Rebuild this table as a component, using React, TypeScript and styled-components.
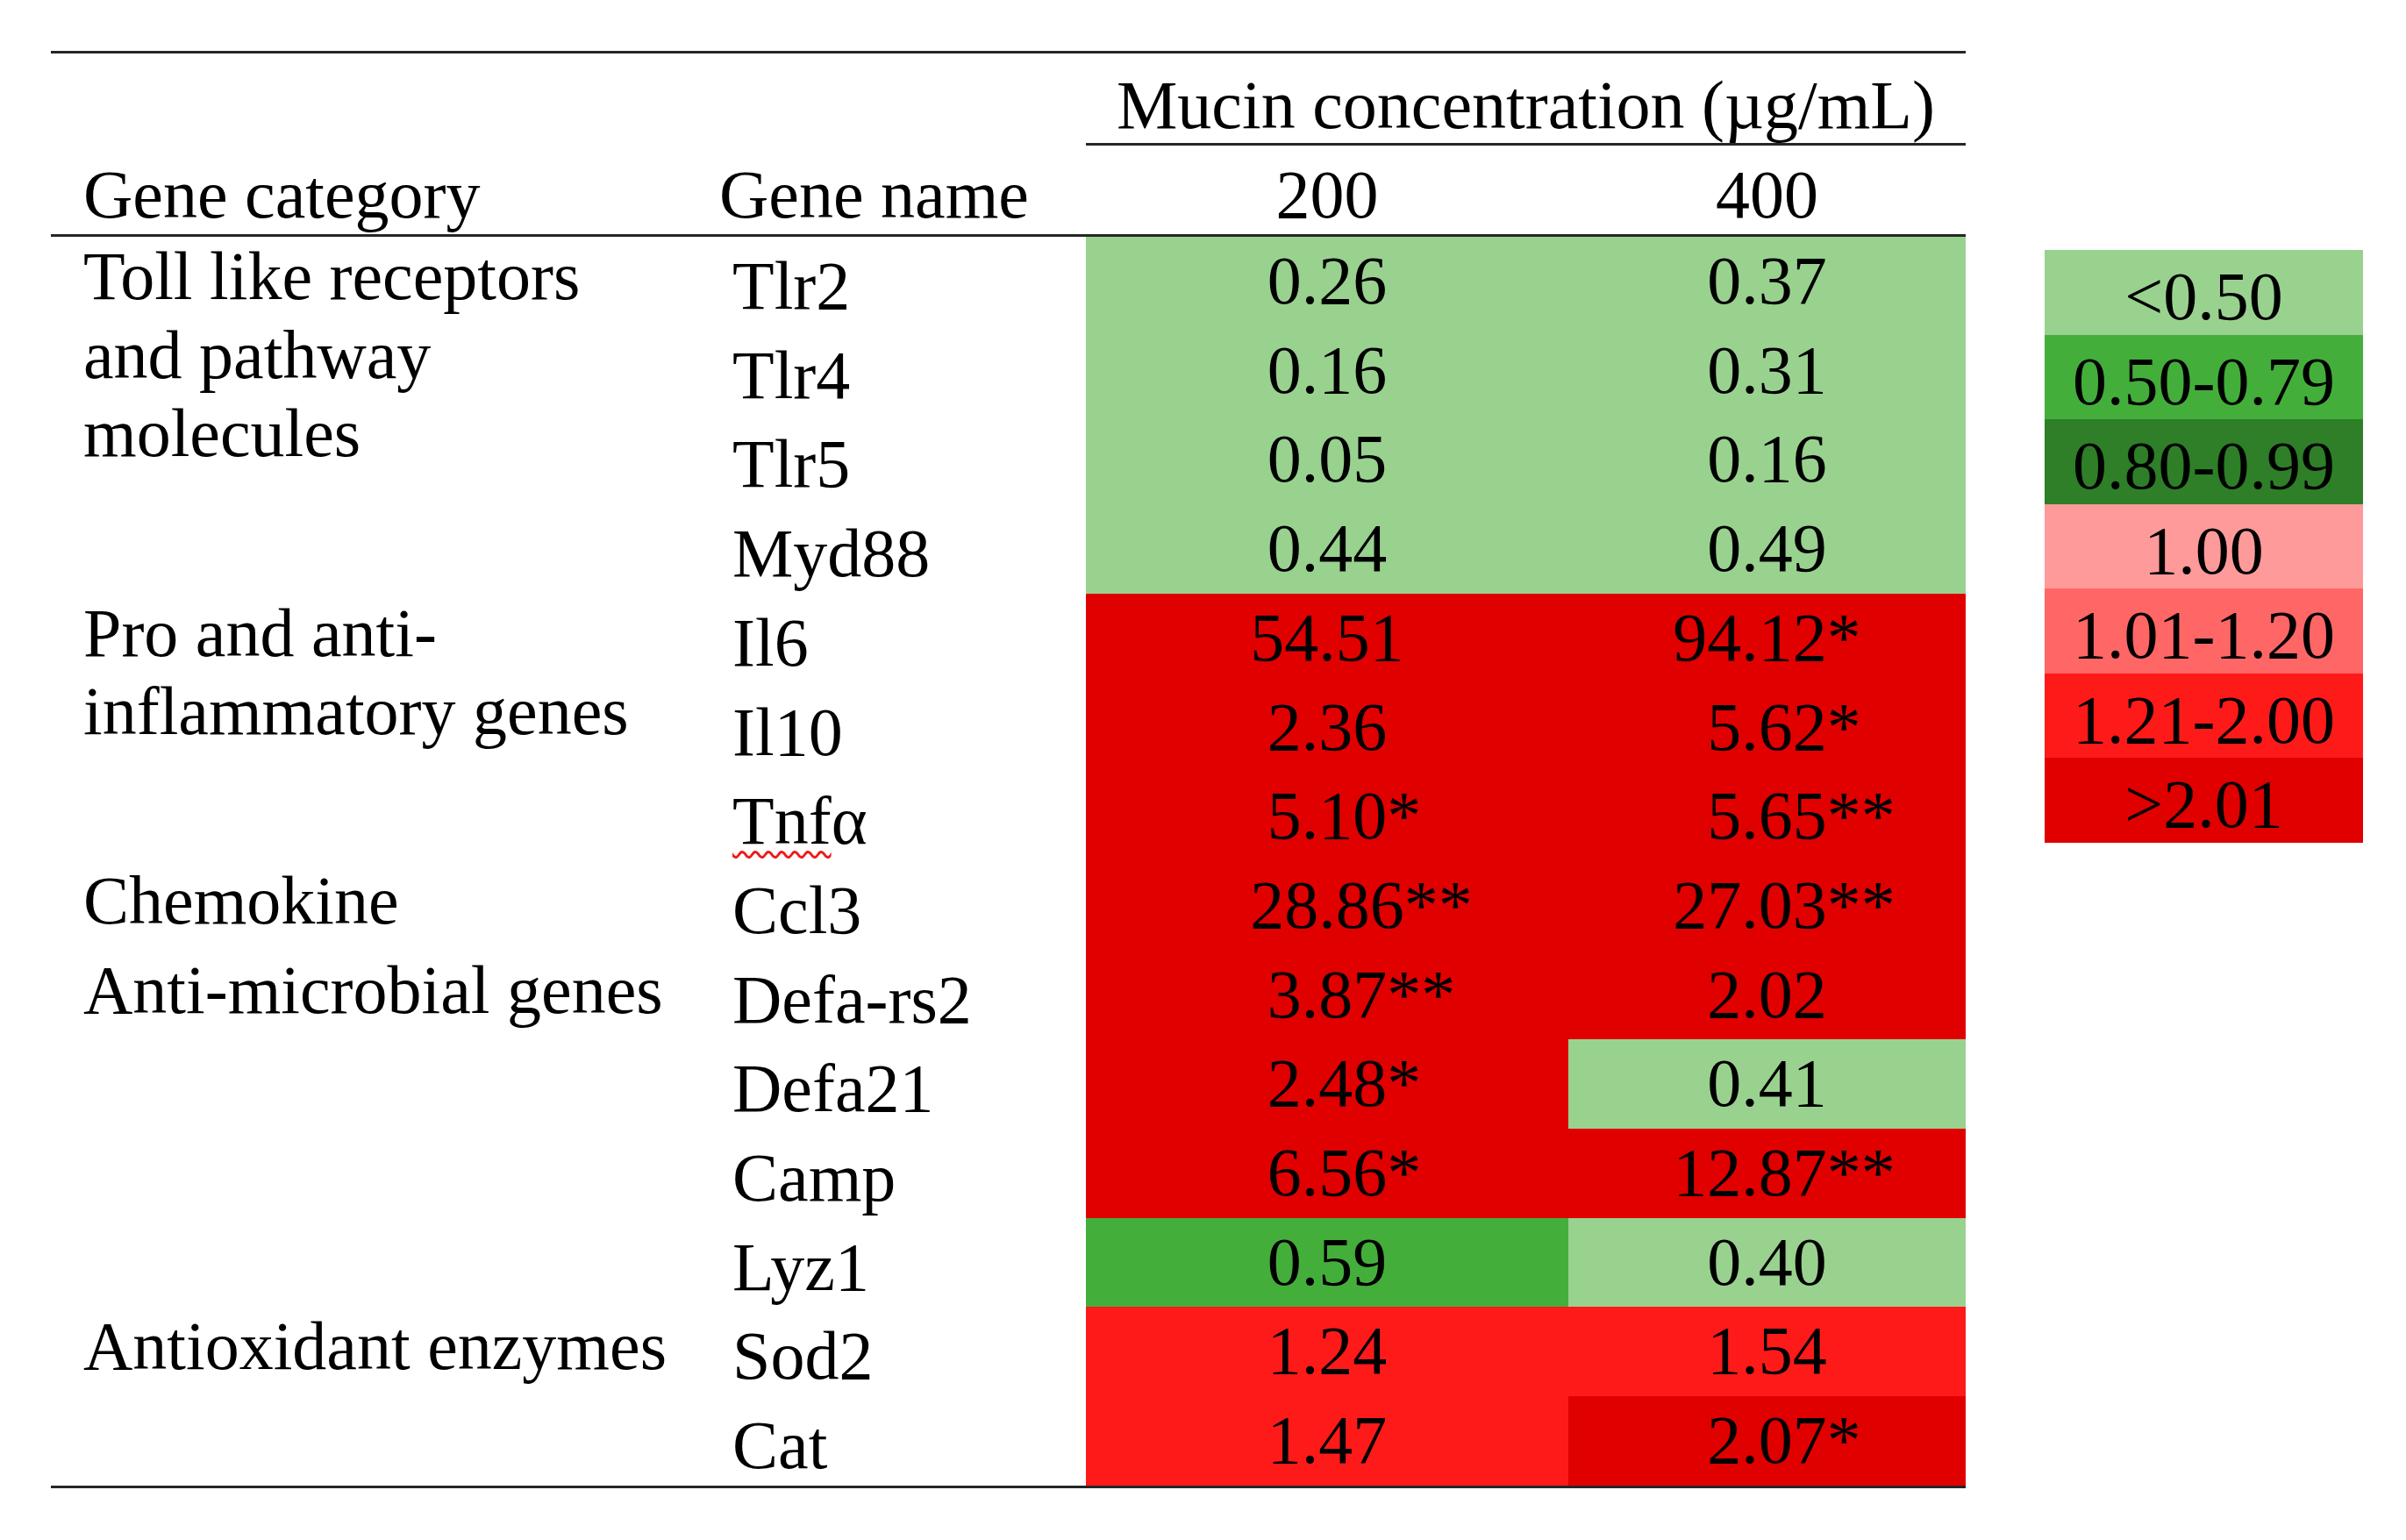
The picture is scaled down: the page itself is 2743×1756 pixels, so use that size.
import React from "react";
import styled, { createGlobalStyle } from "styled-components";

const GlobalStyle = createGlobalStyle`
  html, body {
    margin: 0;
    padding: 0;
    background: #ffffff;
  }
  * { box-sizing: border-box; }
`;

const C = {
  lightGreen: "#99d28f",
  green: "#44ae3b",
  darkGreen: "#2e7f27",
  pink: "#ff9a9a",
  salmon: "#ff6666",
  red: "#ff1a1a",
  darkRed: "#e00000",
  rule: "#262626",
};

const Page = styled.div`
  display: flex;
  align-items: flex-start;
  padding: 58px 0 0 58px;
  font-family: "Liberation Serif", "Times New Roman", serif;
  font-size: 78px;
  color: #000;
`;

const Table = styled.div`
  display: grid;
  grid-template-columns: 742px 438px 550px 453px;
  grid-template-rows: 105px 104px repeat(14, 101.714px);
  border-top: 3px solid ${C.rule};
  border-bottom: 3px solid ${C.rule};
  box-sizing: content-box;
`;

const SpanHead = styled.div`
  grid-column: 3 / 5;
  grid-row: 1;
  border-bottom: 3px solid ${C.rule};
  padding-top: 20px;
  line-height: 1;
  text-align: center;
  white-space: nowrap;
`;

const HeadCell = styled.div<{ $col: number; $align: "left" | "center"; $indent?: number }>`
  grid-column: ${(p) => p.$col};
  grid-row: 2;
  border-bottom: 3px solid ${C.rule};
  padding-top: 17px;
  padding-left: ${(p) => p.$indent ?? 0}px;
  line-height: 1;
  text-align: ${(p) => p.$align};
  white-space: nowrap;
`;

const CategoryCell = styled.div<{ $row: number; $span: number }>`
  grid-column: 1;
  grid-row: ${(p) => p.$row} / span ${(p) => p.$span};
  padding-left: 37px;
  line-height: 89.5px;
  white-space: nowrap;
`;

const GeneCell = styled.div<{ $row: number }>`
  grid-column: 2;
  grid-row: ${(p) => p.$row};
  padding: 17px 0 0 35px;
  line-height: 1;
  white-space: nowrap;
`;

const Misspelt = styled.span`
  text-decoration: underline wavy #ee1c1c;
  text-decoration-thickness: 3px;
  text-underline-offset: 8px;
  text-decoration-skip-ink: none;
`;

const ValueCell = styled.div<{ $row: number; $col: number; $bg: string }>`
  grid-column: ${(p) => p.$col};
  grid-row: ${(p) => p.$row};
  background: ${(p) => p.$bg};
  display: grid;
  grid-template-columns: 1fr auto 1fr;
  align-items: start;
  padding-top: 11px;
  line-height: 1;
`;

const Num = styled.span<{ $decimal: boolean }>`
  grid-column: 2;
  display: flex;
  justify-content: ${(p) => (p.$decimal ? "flex-end" : "center")};
  width: ${(p) => (p.$decimal ? "1.75em" : "auto")};
  white-space: nowrap;
`;

const Stars = styled.span`
  grid-column: 3;
  white-space: nowrap;
`;

const Legend = styled.div`
  display: flex;
  flex-direction: column;
  width: 363px;
  margin: 227px 0 0 90px;
`;

const LegendItem = styled.div<{ $bg: string }>`
  height: 96.57px;
  background: ${(p) => p.$bg};
  padding-top: 14px;
  line-height: 1;
  text-align: center;
  white-space: nowrap;
`;

type Row = { gene: React.ReactNode; a: [string, string]; b: [string, string] };

const rows: Row[] = [
  { gene: "Tlr2", a: ["0.26", C.lightGreen], b: ["0.37", C.lightGreen] },
  { gene: "Tlr4", a: ["0.16", C.lightGreen], b: ["0.31", C.lightGreen] },
  { gene: "Tlr5", a: ["0.05", C.lightGreen], b: ["0.16", C.lightGreen] },
  { gene: "Myd88", a: ["0.44", C.lightGreen], b: ["0.49", C.lightGreen] },
  { gene: "Il6", a: ["54.51", C.darkRed], b: ["94.12*", C.darkRed] },
  { gene: "Il10", a: ["2.36", C.darkRed], b: ["5.62*", C.darkRed] },
  {
    gene: (
      <>
        <Misspelt>Tnf</Misspelt>α
      </>
    ),
    a: ["5.10*", C.darkRed],
    b: ["5.65**", C.darkRed],
  },
  { gene: "Ccl3", a: ["28.86**", C.darkRed], b: ["27.03**", C.darkRed] },
  { gene: "Defa-rs2", a: ["3.87**", C.darkRed], b: ["2.02", C.darkRed] },
  { gene: "Defa21", a: ["2.48*", C.darkRed], b: ["0.41", C.lightGreen] },
  { gene: "Camp", a: ["6.56*", C.darkRed], b: ["12.87**", C.darkRed] },
  { gene: "Lyz1", a: ["0.59", C.green], b: ["0.40", C.lightGreen] },
  { gene: "Sod2", a: ["1.24", C.red], b: ["1.54", C.red] },
  { gene: "Cat", a: ["1.47", C.red], b: ["2.07*", C.darkRed] },
];

const categories: { start: number; span: number; lines: string[] }[] = [
  { start: 0, span: 4, lines: ["Toll like receptors", "and pathway", "molecules"] },
  { start: 4, span: 3, lines: ["Pro and anti-", "inflammatory genes"] },
  { start: 7, span: 1, lines: ["Chemokine"] },
  { start: 8, span: 4, lines: ["Anti-microbial genes"] },
  { start: 12, span: 2, lines: ["Antioxidant enzymes"] },
];

const legend: [string, string][] = [
  ["<0.50", C.lightGreen],
  ["0.50-0.79", C.green],
  ["0.80-0.99", C.darkGreen],
  ["1.00", C.pink],
  ["1.01-1.20", C.salmon],
  ["1.21-2.00", C.red],
  [">2.01", C.darkRed],
];

const BODY_START = 3;

function Value({ text, row, col, bg }: { text: string; row: number; col: number; bg: string }) {
  const m = text.match(/^([^*]*)(\**)$/);
  const num = m ? m[1] : text;
  const stars = m ? m[2] : "";
  return (
    <ValueCell $row={row} $col={col} $bg={bg}>
      <Num $decimal={col === 4}>{num}</Num>
      <Stars>{stars}</Stars>
    </ValueCell>
  );
}

export default function App() {
  return (
    <>
      <GlobalStyle />
      <Page>
        <Table>
          <SpanHead>Mucin concentration (µg/mL)</SpanHead>
          <HeadCell $col={1} $align="left" $indent={37}>
            Gene category
          </HeadCell>
          <HeadCell $col={2} $align="left" $indent={20}>
            Gene name
          </HeadCell>
          <HeadCell $col={3} $align="center">
            200
          </HeadCell>
          <HeadCell $col={4} $align="center">
            400
          </HeadCell>

          {categories.map((c) => (
            <CategoryCell key={c.start} $row={BODY_START + c.start} $span={c.span}>
              {c.lines.map((l, i) => (
                <React.Fragment key={i}>
                  {i > 0 && <br />}
                  {l}
                </React.Fragment>
              ))}
            </CategoryCell>
          ))}

          {rows.map((r, i) => (
            <React.Fragment key={i}>
              <GeneCell $row={BODY_START + i}>{r.gene}</GeneCell>
              <Value text={r.a[0]} bg={r.a[1]} row={BODY_START + i} col={3} />
              <Value text={r.b[0]} bg={r.b[1]} row={BODY_START + i} col={4} />
            </React.Fragment>
          ))}
        </Table>

        <Legend>
          {legend.map(([label, bg]) => (
            <LegendItem key={label} $bg={bg}>
              {label}
            </LegendItem>
          ))}
        </Legend>
      </Page>
    </>
  );
}
